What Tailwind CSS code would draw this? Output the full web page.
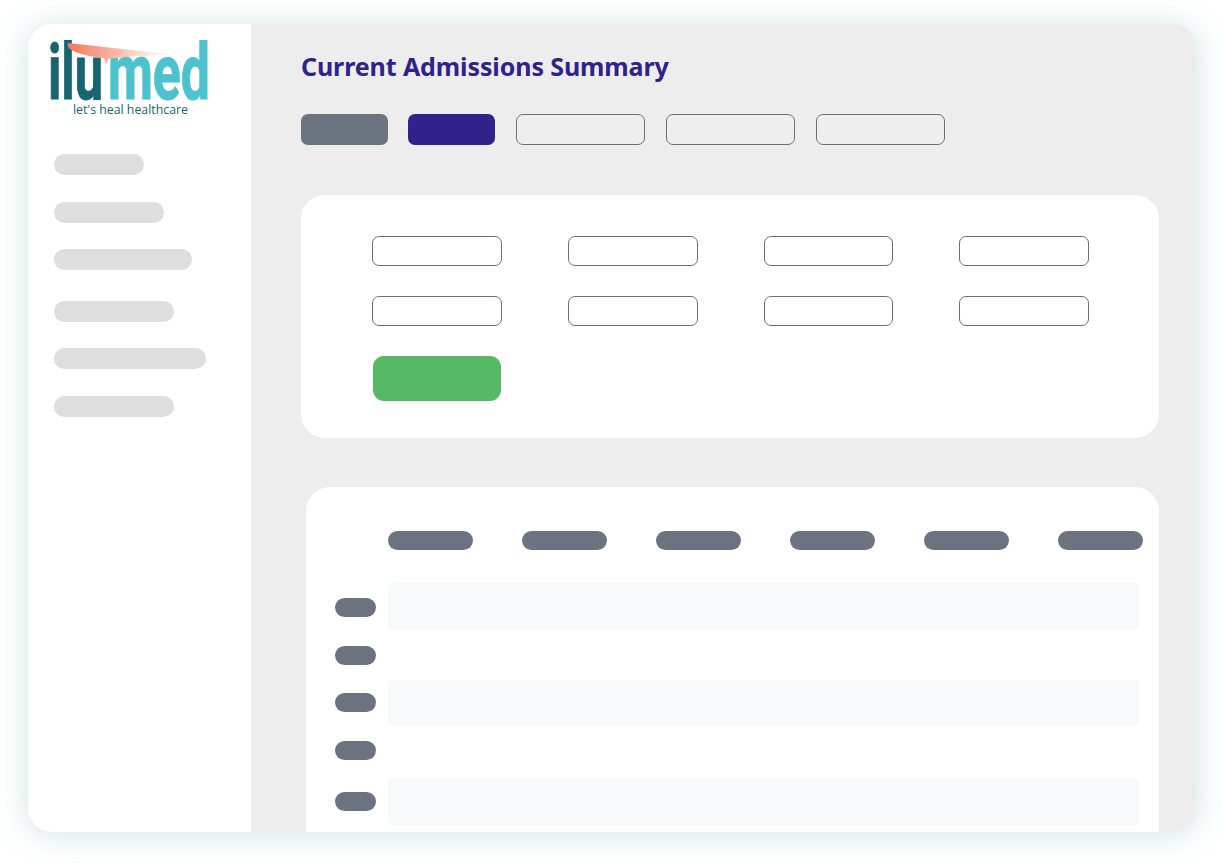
<!doctype html>
<html>
<head>
<meta charset="utf-8">
<script src="https://cdn.jsdelivr.net/npm/@tailwindcss/browser@4"></script>
</head>
<body class="bg-white">
<div class="w-[1222px] h-[864px] pt-[24px] pl-[28px] bg-white overflow-hidden">
  <div class="w-[1168px] h-[808px] flex rounded-[24px] overflow-hidden bg-[#ededed] shadow-[0_2px_32px_rgba(100,165,165,0.3)]">
    <aside class="w-[223px] shrink-0 bg-white pl-[26px] flex flex-col">
      <svg class="ml-[-6px] mt-[14px] block" width="170" height="80" viewBox="0 0 170 80">
        <defs>
          <linearGradient id="beam" x1="0" x2="1" y1="0" y2="0">
            <stop offset="0" stop-color="#f4785c"/>
            <stop offset="0.45" stop-color="#f9b9a6"/>
            <stop offset="1" stop-color="#fdeee8" stop-opacity="0.2"/>
          </linearGradient>
        </defs>
        <text x="0" y="61" font-family="Roboto" font-weight="700" font-size="78" fill="#17656f" stroke="#17656f" stroke-width="1" textLength="55" lengthAdjust="spacingAndGlyphs">ilu</text>
        <text x="60" y="61" font-family="Roboto" font-weight="700" font-size="78" fill="#4cc3cc" stroke="#4cc3cc" stroke-width="1" textLength="102" lengthAdjust="spacingAndGlyphs">med</text>
        <path d="M20 5 L129 17 C 100 17 75 19 60 21 L58 27 L56 20 C 40 19 26 14 22 11 C 20 9 19 7 20 5 Z" fill="url(#beam)"/>
        <text x="25" y="76" font-family="'Open Sans'" font-size="12.5" fill="#17656f" textLength="115" lengthAdjust="spacingAndGlyphs">let's heal healthcare</text>
      </svg>
      <div class="mt-[36px] w-[90px] h-[21px] rounded-full bg-[#dedede]"></div>
      <div class="mt-[27px] w-[110px] h-[21px] rounded-full bg-[#dedede]"></div>
      <div class="mt-[26px] w-[138px] h-[21px] rounded-full bg-[#dedede]"></div>
      <div class="mt-[31px] w-[120px] h-[21px] rounded-full bg-[#dedede]"></div>
      <div class="mt-[26px] w-[152px] h-[21px] rounded-full bg-[#dedede]"></div>
      <div class="mt-[27px] w-[120px] h-[21px] rounded-full bg-[#dedede]"></div>
    </aside>
    <main class="flex-1 pl-[50px] pr-[37px] min-w-0">
      <h1 class="mt-[24px] h-[36px] leading-[36px] text-[25px] font-bold text-[#2f228c] font-['Noto_Sans',sans-serif] tracking-[-0.1px]">Current Admissions Summary</h1>
      <div class="mt-[30px] flex h-[31px]">
        <div class="w-[87px] rounded-[7px] bg-[#6b7280]"></div>
        <div class="ml-[20px] w-[87px] rounded-[7px] bg-[#2f228c]"></div>
        <div class="ml-[21px] w-[129px] rounded-[7px] border border-[#6f6f6f] bg-[#eeeeee]"></div>
        <div class="ml-[21px] w-[129px] rounded-[7px] border border-[#6f6f6f] bg-[#eeeeee]"></div>
        <div class="ml-[21px] w-[129px] rounded-[7px] border border-[#6f6f6f] bg-[#eeeeee]"></div>
      </div>
      <section class="mt-[50px] h-[243px] rounded-[24px] bg-white pl-[71.4px] pt-[41px]">
        <div class="grid grid-cols-[130px_129.4px_129.4px_130px] gap-x-[65.95px] gap-y-[30px]">
          <div class="h-[30px] rounded-[7px] border border-[#6f6f6f]"></div>
          <div class="h-[30px] rounded-[7px] border border-[#6f6f6f]"></div>
          <div class="h-[30px] rounded-[7px] border border-[#6f6f6f]"></div>
          <div class="h-[30px] rounded-[7px] border border-[#6f6f6f]"></div>
          <div class="h-[30px] rounded-[7px] border border-[#6f6f6f]"></div>
          <div class="h-[30px] rounded-[7px] border border-[#6f6f6f]"></div>
          <div class="h-[30px] rounded-[7px] border border-[#6f6f6f]"></div>
          <div class="h-[30px] rounded-[7px] border border-[#6f6f6f]"></div>
        </div>
        <div class="mt-[30px] ml-px w-[128px] h-[45px] rounded-[11px] bg-[#56b965]"></div>
      </section>
      <section class="mt-[49px] ml-[5px] h-[400px] rounded-[24px] bg-white pl-[29px] pr-[20px] pt-[44px]">
        <div class="ml-[53px] flex gap-x-[49.5px]">
          <div class="w-[84.5px] h-[19px] shrink-0 rounded-full bg-[#6b7280]"></div>
          <div class="w-[84.5px] h-[19px] shrink-0 rounded-full bg-[#6b7280]"></div>
          <div class="w-[84.5px] h-[19px] shrink-0 rounded-full bg-[#6b7280]"></div>
          <div class="w-[84.5px] h-[19px] shrink-0 rounded-full bg-[#6b7280]"></div>
          <div class="w-[84.5px] h-[19px] shrink-0 rounded-full bg-[#6b7280]"></div>
          <div class="w-[84.5px] h-[19px] shrink-0 rounded-full bg-[#6b7280]"></div>
        </div>
        <div class="mt-[33px] flex flex-col">
          <div class="h-[48px] flex items-center gap-x-[12px]"><div class="w-[41px] h-[19px] rounded-full bg-[#6b7280]"></div><div class="flex-1 h-full rounded-[5px] bg-[#f8f9fa]"></div></div>
          <div class="h-[49px] flex items-center gap-x-[12px]"><div class="w-[41px] h-[19px] rounded-full bg-[#6b7280]"></div></div>
          <div class="h-[46px] flex items-center gap-x-[12px]"><div class="w-[41px] h-[19px] mt-[-1px] rounded-full bg-[#6b7280]"></div><div class="flex-1 h-full rounded-[5px] bg-[#f8f9fa]"></div></div>
          <div class="h-[51px] flex items-center gap-x-[12px]"><div class="w-[41px] h-[19px] mt-[-2px] rounded-full bg-[#6b7280]"></div></div>
          <div class="h-[48px] flex items-center gap-x-[12px]"><div class="w-[41px] h-[19px] rounded-full bg-[#6b7280]"></div><div class="flex-1 h-full rounded-[5px] bg-[#f8f9fa]"></div></div>
        </div>
      </section>
    </main>
  </div>
</div>
</body>
</html>
